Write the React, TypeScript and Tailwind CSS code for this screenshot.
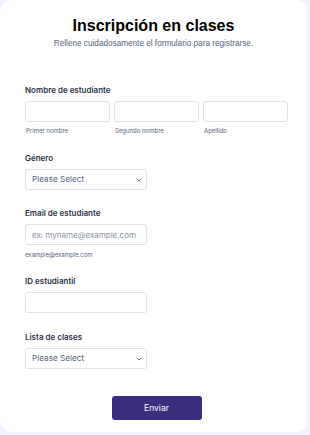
import { ChevronDown } from 'lucide-react';

function Label({ children }: { children: React.ReactNode }) {
  return (
    <div className="text-[8px] leading-[12px] font-semibold text-[#2c3345] mb-[5px]">{children}</div>
  );
}

function Select() {
  return (
    <div className="w-[122px] h-[21px] border border-[#dfe2ea] rounded-[3px] bg-white flex items-center justify-between pl-[6px] pr-[3px]">
      <span className="text-[8.2px] text-[#57647e]">Please Select</span>
      <ChevronDown size={8} strokeWidth={2.5} className="text-[#57647e]" />
    </div>
  );
}

export default function App() {
  return (
    <div className="min-h-screen bg-[#f3f3fe]" style={{ fontFamily: 'Inter, "Noto Sans", sans-serif' }}>
      <div className="w-[307px] h-[432px] bg-white rounded-xl pt-[15px] pl-[25px] pr-[19px]">
        <div className="text-center -ml-[25px] -mr-[19px]" style={{ fontFamily: '"Liberation Sans", Arial, sans-serif' }}>
          <h1 className="text-[16px] leading-[21px] font-bold text-black">Inscripción en clases</h1>
          <p className="text-[8.2px] leading-[12px] text-[#57647e] mt-[2px]">
            Rellene cuidadosamente el formulario para registrarse.
          </p>
        </div>

        {/* Nombre */}
        <div className="mt-[34px]">
          <Label>Nombre de estudiante</Label>
          <div className="grid grid-cols-3 gap-[4px]">
            {['Primer nombre', 'Segundo nombre', 'Apellido'].map((s) => (
              <div key={s}>
                <div className="h-[21px] border border-[#dfe2ea] rounded-[3px] bg-white" />
                <div className="text-[6px] leading-[10px] text-[#57647e] mt-[4px] pl-[1px]">{s}</div>
              </div>
            ))}
          </div>
        </div>

        {/* Genero */}
        <div className="mt-[16px]">
          <Label>Género</Label>
          <Select />
        </div>

        {/* Email */}
        <div className="mt-[17px]">
          <Label>Email de estudiante</Label>
          <div className="w-[122px] h-[21px] border border-[#dfe2ea] rounded-[3px] bg-white flex items-center pl-[6px] mt-[1px]">
            <span className="text-[8px] text-[#8d94a6]">ex: myname@example.com</span>
          </div>
          <div className="text-[6px] leading-[10px] text-[#57647e] mt-[5px]">example@example.com</div>
        </div>

        {/* ID */}
        <div className="mt-[15px]">
          <Label>ID estudiantil</Label>
          <div className="w-[122px] h-[21px] border border-[#dfe2ea] rounded-[3px] bg-white mt-[1px]" />
        </div>

        {/* Lista */}
        <div className="mt-[18px]">
          <Label>Lista de clases</Label>
          <Select />
        </div>

        <div className="flex justify-center mt-[27px]">
          <button className="w-[90px] h-[24px] bg-[#3b2e7e] text-white text-[8.5px] rounded-[3px]">Enviar</button>
        </div>
      </div>
    </div>
  );
}
